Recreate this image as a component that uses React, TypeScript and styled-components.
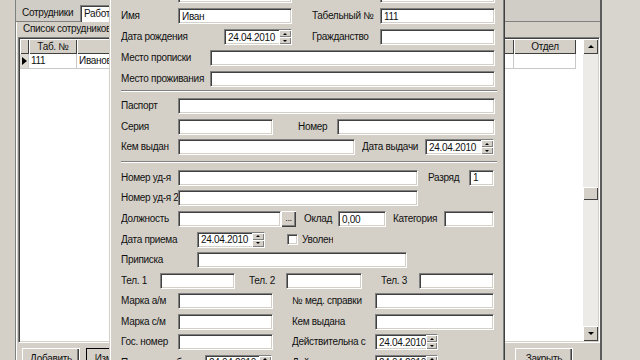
import styled, { createGlobalStyle } from 'styled-components'

const GlobalStyle = createGlobalStyle`
  html, body {
    margin: 0;
    padding: 0;
    overflow: hidden;
  }
  body {
    width: 640px;
    height: 360px;
    background: #d8d5cf;
    font-family: "Liberation Sans", Arial, sans-serif;
    font-size: 10px;
    letter-spacing: -0.3px;
    color: #111;
  }
`

const Desktop = styled.div`
  position: relative;
  width: 640px;
  height: 360px;
  overflow: hidden;
  display: flex;
  background: #d8d5cf;
`

const MainWindow = styled.div`
  width: 602px;
  height: 100%;
  flex: none;
  display: flex;
  box-sizing: border-box;
  padding-left: 15px;
  background: #d4d0c8;
  border-right: 2px solid #5c5c5c;
`

const Panel = styled.div`
  flex: 1;
  display: flex;
  flex-direction: column;
  min-width: 0;
  border-left: 1px solid #808080;
  box-shadow: inset 1px 0 0 #fff;
`

const TopBar = styled.div`
  height: 22px;
  flex: none;
  display: flex;
  align-items: flex-start;
  box-sizing: border-box;
  padding: 5px 0 0 6px;
  background: #d0cdc6;
  border-bottom: 1px solid #808080;
`

const BarLabel = styled.span`
  width: 58px;
  line-height: 16px;
`

const Combo = styled.div`
  width: 220px;
  height: 17px;
  box-sizing: border-box;
  background: #fff;
  border-top: 1px solid #808080;
  border-left: 1px solid #808080;
  box-shadow: inset 1px 1px 0 #404040;
  padding-left: 3px;
  line-height: 15px;
`

const GroupTitle = styled.div`
  height: 15px;
  flex: none;
  padding-left: 7px;
  line-height: 13px;
`

const GridBox = styled.div`
  flex: 1;
  margin-left: 2px;
  display: flex;
  background: #fff;
  border-top: 1px solid #808080;
  border-left: 1px solid #808080;
  border-bottom: 1px solid #fff;
  border-right: 1px solid #fff;
  box-shadow: inset 1px 1px 0 #404040, inset -1px -1px 0 #d4d0c8;
  padding: 1px;
  box-sizing: border-box;
`

const GridBody = styled.div`
  flex: 1;
  display: flex;
  flex-direction: column;
`

const GridRow = styled.div`
  display: flex;
  height: 15px;
`

const HeadCell = styled.div<{ $w: number }>`
  width: ${p => p.$w}px;
  flex: none;
  box-sizing: border-box;
  background: #d4d0c8;
  box-shadow: inset 1px 1px 0 #fff, inset -1px -1px 0 #404040;
  text-align: center;
  line-height: 15px;
  overflow: hidden;
  white-space: nowrap;
`

const Cell = styled.div<{ $w: number; $fixed?: boolean }>`
  width: ${p => p.$w}px;
  flex: none;
  box-sizing: border-box;
  background: ${p => (p.$fixed ? '#dedbd5' : '#fff')};
  border-right: 1px solid #c8c8c8;
  border-bottom: 1px solid #c8c8c8;
  padding-left: 2px;
  line-height: 14px;
  overflow: hidden;
  white-space: nowrap;
  display: flex;
  align-items: center;
`

const RowMark = styled.span`
  width: 0;
  height: 0;
  border-top: 4px solid transparent;
  border-bottom: 4px solid transparent;
  border-left: 5px solid #000;
`

const ScrollBar = styled.div`
  width: 15px;
  flex: none;
  display: flex;
  flex-direction: column;
  background: #ecebe7;
`

const ScrollBtn = styled.div`
  height: 15px;
  flex: none;
  box-sizing: border-box;
  background: #d4d0c8;
  box-shadow: inset 1px 1px 0 #fff, inset -1px -1px 0 #404040;
  display: flex;
  align-items: center;
  justify-content: center;
`

const Arrow = styled.span<{ $down?: boolean }>`
  width: 0;
  height: 0;
  border-left: 3px solid transparent;
  border-right: 3px solid transparent;
  ${p => (p.$down ? 'border-top: 3px solid #000;' : 'border-bottom: 3px solid #000;')}
`

const Track = styled.div`
  flex: 1;
  display: flex;
  flex-direction: column;
`

const Thumb = styled.div<{ $top: number }>`
  height: 13px;
  margin-top: ${p => p.$top}px;
  background: #d4d0c8;
  box-shadow: inset 1px 1px 0 #fff, inset -1px -1px 0 #404040;
`

const ButtonBar = styled.div`
  height: 17px;
  flex: none;
  display: flex;
  gap: 6px;
  padding: 5px 27px 0 6px;
  box-sizing: border-box;
  overflow: visible;
`

const Button = styled.div<{ $w: number; $default?: boolean; $push?: boolean }>`
  width: ${p => p.$w}px;
  height: 22px;
  flex: none;
  box-sizing: border-box;
  background: #d4d0c8;
  border: 1px solid ${p => (p.$default ? '#000' : '#fff')};
  box-shadow: inset -1px -1px 0 #404040, inset -2px -2px 0 #808080;
  text-align: center;
  line-height: 19px;
  margin-left: ${p => (p.$push ? 'auto' : '0')};
`

/* dialog window over the list */

const Dialog = styled.div`
  position: absolute;
  left: 109px;
  top: -16px;
  width: 396px;
  height: 400px;
  box-sizing: border-box;
  background: #d4d0c8;
  border-left: 1px solid #d4d0c8;
  border-right: 1px solid #404040;
  box-shadow: inset 1px 0 0 #fff, inset -1px 0 0 #808080;
  padding: 0.5px 0 0 11px;
`

const Row = styled.div<{ $h?: number }>`
  display: flex;
  align-items: center;
  height: ${p => p.$h ?? 20.55}px;
`

const Label = styled.span<{ $w?: number; $ml?: number }>`
  flex: none;
  width: ${p => (p.$w ? `${p.$w}px` : 'auto')};
  margin-left: ${p => p.$ml ?? 0}px;
  white-space: nowrap;
  overflow: hidden;
  line-height: 14px;
`

const Field = styled.div<{ $w: number; $ml?: number }>`
  flex: none;
  box-sizing: border-box;
  width: ${p => p.$w}px;
  height: 16px;
  margin-left: ${p => p.$ml ?? 0}px;
  background: #fff;
  border-top: 1px solid #808080;
  border-left: 1px solid #808080;
  border-bottom: 1px solid #fff;
  border-right: 1px solid #fff;
  box-shadow: inset 1px 1px 0 #404040, inset -1px -1px 0 #d4d0c8;
  padding-left: 3px;
  display: flex;
  align-items: center;
  line-height: 13px;
  white-space: nowrap;
  overflow: hidden;
`

const Spin = styled.div`
  margin-left: auto;
  width: 12px;
  height: 14px;
  display: flex;
  flex-direction: column;
`

const SpinBtn = styled.div`
  flex: 1;
  background: #d4d0c8;
  box-shadow: inset 1px 1px 0 #fff, inset -1px -1px 0 #808080;
  display: flex;
  align-items: center;
  justify-content: center;
`

const SmallArrow = styled.span<{ $down?: boolean }>`
  width: 0;
  height: 0;
  border-left: 2px solid transparent;
  border-right: 2px solid transparent;
  ${p => (p.$down ? 'border-top: 2px solid #000;' : 'border-bottom: 2px solid #000;')}
`

const DotsButton = styled.div`
  flex: none;
  width: 15px;
  height: 16px;
  box-sizing: border-box;
  background: #d4d0c8;
  box-shadow: inset 1px 1px 0 #fff, inset -1px -1px 0 #404040, inset -2px -2px 0 #808080;
  text-align: center;
  line-height: 14px;
  font-size: 9px;
`

const CheckBox = styled.span<{ $ml?: number }>`
  flex: none;
  width: 11px;
  height: 11px;
  box-sizing: border-box;
  margin-left: ${p => p.$ml ?? 0}px;
  background: #fff;
  border-top: 1px solid #808080;
  border-left: 1px solid #808080;
  border-bottom: 1px solid #fff;
  border-right: 1px solid #fff;
  box-shadow: inset 1px 1px 0 #404040, inset -1px -1px 0 #d4d0c8;
`

const Separator = styled.div<{ $mt: number; $mb: number }>`
  height: 0;
  margin: ${p => p.$mt}px 0 ${p => p.$mb}px 0;
  width: 376px;
  border-top: 1px solid #808080;
  border-bottom: 1px solid #fff;
`

const DateField = ({ w, ml, value }: { w: number; ml?: number; value: string }) => (
  <Field $w={w} $ml={ml}>
    {value}
    <Spin>
      <SpinBtn><SmallArrow /></SpinBtn>
      <SpinBtn><SmallArrow $down /></SpinBtn>
    </Spin>
  </Field>
)

const columns = [
  { title: '', w: 9 },
  { title: 'Таб. №', w: 48 },
  { title: 'Ф.И.О.', w: 150 },
  { title: 'Должность', w: 140 },
  { title: 'Подразделение', w: 147 },
  { title: 'Отдел', w: 62 },
]

const rowValues = ['', '111', 'Иванов', '', '', '']

const DATE = '24.04.2010'

export default function App() {
  return (
    <Desktop>
      <GlobalStyle />
      <MainWindow>
        <Panel>
          <TopBar>
            <BarLabel>Сотрудники</BarLabel>
            <Combo>Работающие</Combo>
          </TopBar>
          <GroupTitle>Список сотрудников</GroupTitle>
          <GridBox>
            <GridBody>
              <GridRow>
                {columns.map((c, i) => (
                  <HeadCell key={i} $w={c.w}>{c.title}</HeadCell>
                ))}
              </GridRow>
              <GridRow>
                {columns.map((c, i) => (
                  <Cell key={i} $w={c.w} $fixed={i === 0}>
                    {i === 0 ? <RowMark /> : rowValues[i]}
                  </Cell>
                ))}
              </GridRow>
            </GridBody>
            <ScrollBar>
              <ScrollBtn><Arrow /></ScrollBtn>
              <Track>
                <Thumb $top={133} />
              </Track>
              <ScrollBtn><Arrow $down /></ScrollBtn>
            </ScrollBar>
          </GridBox>
          <ButtonBar>
            <Button $w={58}>Добавить</Button>
            <Button $w={60} $default>Изменить</Button>
            <Button $w={58} $push>Закрыть</Button>
          </ButtonBar>
        </Panel>
      </MainWindow>

      <Dialog>
        <Row $h={21}>
          <Label $w={57}>Фамилия</Label>
          <Field $w={114}>Иванов</Field>
          <Label $ml={20} $w={68}>Отчество</Label>
          <Field $w={115} />
        </Row>
        <Row $h={21}>
          <Label $w={57}>Имя</Label>
          <Field $w={114}>Иван</Field>
          <Label $ml={20} $w={68}>Табельный №</Label>
          <Field $w={115}>111</Field>
        </Row>
        <Row $h={21}>
          <Label $w={103}>Дата рождения</Label>
          <DateField w={68} value={DATE} />
          <Label $ml={20} $w={68}>Гражданство</Label>
          <Field $w={115} />
        </Row>
        <Row $h={21}>
          <Label $w={89}>Место прописки</Label>
          <Field $w={285} />
        </Row>
        <Row $h={21}>
          <Label $w={89}>Место проживания</Label>
          <Field $w={285} />
        </Row>
        <Separator $mt={0.5} $mb={3.7} />
        <Row>
          <Label $w={57}>Паспорт</Label>
          <Field $w={317} />
        </Row>
        <Row>
          <Label $w={57}>Серия</Label>
          <Field $w={95} />
          <Label $ml={25} $w={39}>Номер</Label>
          <Field $w={158} />
        </Row>
        <Row>
          <Label $w={57}>Кем выдан</Label>
          <Field $w={177} />
          <Label $ml={7} $w={63}>Дата выдачи</Label>
          <DateField w={69} value={DATE} />
        </Row>
        <Separator $mt={3.35} $mb={5} />
        <Row>
          <Label $w={57}>Номер уд-я</Label>
          <Field $w={240} />
          <Label $ml={10} $w={41}>Разряд</Label>
          <Field $w={25}>1</Field>
        </Row>
        <Row>
          <Label $w={57}>Номер уд-я 2</Label>
          <Field $w={240} />
        </Row>
        <Row>
          <Label $w={57}>Должность</Label>
          <Field $w={103} />
          <DotsButton>...</DotsButton>
          <Label $ml={8} $w={34}>Оклад</Label>
          <Field $w={48}>0,00</Field>
          <Label $ml={7} $w={51}>Категория</Label>
          <Field $w={50} />
        </Row>
        <Row>
          <Label $w={76}>Дата приема</Label>
          <DateField w={68} value={DATE} />
          <CheckBox $ml={22} />
          <Label $ml={4}>Уволен</Label>
        </Row>
        <Row>
          <Label $w={76}>Приписка</Label>
          <Field $w={210} />
        </Row>
        <Row>
          <Label $w={39}>Тел. 1</Label>
          <Field $w={75} />
          <Label $ml={14} $w={37}>Тел. 2</Label>
          <Field $w={76} />
          <Label $ml={19} $w={38}>Тел. 3</Label>
          <Field $w={75} />
        </Row>
        <Row>
          <Label $w={57}>Марка а/м</Label>
          <Field $w={95} />
          <Label $ml={19} $w={83}>№ мед. справки</Label>
          <Field $w={119} />
        </Row>
        <Row>
          <Label $w={57}>Марка с/м</Label>
          <Field $w={95} />
          <Label $ml={19} $w={83}>Кем выдана</Label>
          <Field $w={119} />
        </Row>
        <Row>
          <Label $w={57}>Гос. номер</Label>
          <Field $w={95} />
          <Label $ml={19} $w={83}>Действительна с</Label>
          <DateField w={63} value={DATE} />
        </Row>
        <Row>
          <Label $w={84}>Прием на работу</Label>
          <DateField w={67} value={DATE} />
          <Label $ml={20} $w={83}>Действительна по</Label>
          <DateField w={63} value={DATE} />
        </Row>
      </Dialog>
    </Desktop>
  )
}
